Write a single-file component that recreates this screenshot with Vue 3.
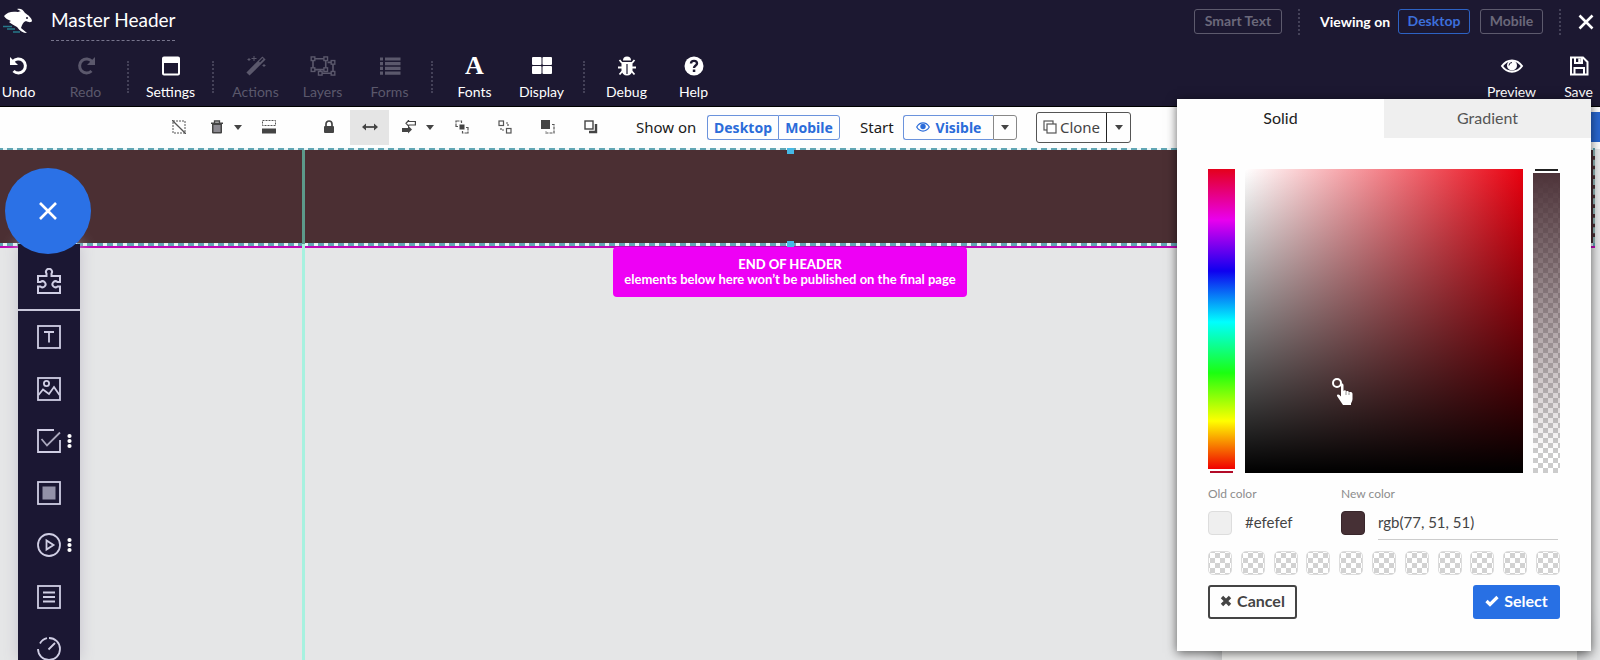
<script setup>
import { ref } from 'vue'

const rgb = ref('rgb(77, 51, 51)')
const hue = ref(0)
const alpha = ref(100)
const swatches = 11
const tools = [
  { name: 'Undo', icon: 'undo' },
  { name: 'Redo', icon: 'redo', off: true },
  { sep: true },
  { name: 'Settings', icon: 'settings' },
  { sep: true },
  { name: 'Actions', icon: 'wand', off: true },
  { name: 'Layers', icon: 'layers', off: true },
  { name: 'Forms', icon: 'forms', off: true },
  { sep: true },
  { name: 'Fonts', icon: 'fonts' },
  { name: 'Display', icon: 'display' },
  { sep: true },
  { name: 'Debug', icon: 'bug' },
  { name: 'Help', icon: 'help' },
]
const widgets = ['text', 'image', 'check', 'box', 'play', 'list', 'gauge']
</script>

<template>
  <div class="app">
    <header class="top">
      <div class="bar">
        <svg class="logo" viewBox="0 0 30 26" aria-hidden="true">
          <path fill="#fff" d="M1 8C4 4 9 3 15 4C17 3 18 3 19 4L14 1C17 0 20 1 22 5C25 7 29 10 29 13C28 15 25 14 23 13C20 14 19 17 18 20L24 25C20 25 17 23 14 19C11 17 8 16 6 14L8 13C5 12 2 10 1 8Z" />
          <circle cx="24" cy="10" r="1" fill="#1c1831" />
          <path stroke="#26798b" stroke-width="1.4" fill="none" d="M0 18.500H9M4 21H12M10 24H17" />
        </svg>
        <h1>Master Header</h1>
        <div class="bar-right">
          <button class="ghost smart">Smart Text</button>
          <i class="dots"></i>
          <span class="viewing">Viewing on</span>
          <button class="ghost on">Desktop</button>
          <button class="ghost mob">Mobile</button>
          <i class="dots last"></i>
          <button class="close" aria-label="Close"><svg width="16" height="16" viewBox="0 0 16 16"><path d="M1.500 1.500L14.500 14.500M14.500 1.500L1.500 14.500" stroke="#fff" stroke-width="2.600" /></svg></button>
        </div>
      </div>
      <nav class="tools">
        <template v-for="(t, i) in tools" :key="i">
          <i v-if="t.sep" class="dots tool-sep"></i>
          <button v-else class="tool" :class="{ off: t.off }">
            <svg v-if="t.icon === 'undo'" width="20" height="20" viewBox="0 0 20 20"><path d="M4 5.500A7 7 0 1 1 4.500 15" fill="none" stroke="currentColor" stroke-width="3" /><path d="M1 1V9H9Z" fill="currentColor" /></svg>
            <svg v-else-if="t.icon === 'redo'" width="20" height="20" viewBox="0 0 20 20"><path d="M16 5.500A7 7 0 1 0 15.500 15" fill="none" stroke="currentColor" stroke-width="3" /><path d="M19 1V9H11Z" fill="currentColor" /></svg>
            <svg v-else-if="t.icon === 'settings'" width="20" height="20" viewBox="0 0 20 20"><path fill="currentColor" fill-rule="evenodd" d="M3 .5H17A2 2 0 0 1 19 2.500V17.500A2 2 0 0 1 17 19.500H3A2 2 0 0 1 1 17.500V2.500A2 2 0 0 1 3 .5ZM3 7V17.500H17V7Z" /></svg>
            <svg v-else-if="t.icon === 'wand'" width="20" height="20" viewBox="0 0 20 20"><path d="M2 18L18 2" stroke="currentColor" stroke-width="4.500" /><path d="M13.500 6L17 2.500" stroke="#1c1831" stroke-width="1.500" /><path d="M3 2V5M1.500 3.500H4.500M8 0V5M5.500 2.500H10.500M18 8V11M16.500 9.500H19.500" stroke="currentColor" stroke-width="1" /></svg>
            <svg v-else-if="t.icon === 'layers'" width="28" height="22" viewBox="0 0 28 22" fill="none" stroke="currentColor" stroke-width="1.800"><path d="M3 3H17V15H3ZM19 7H25V19H11V16" /><g fill="#1c1831" stroke-width="1.500"><rect x="1" y="1" width="4" height="4" /><rect x="15" y="1" width="4" height="4" /><rect x="1" y="13" width="4" height="4" /><rect x="15" y="13" width="4" height="4" /><rect x="23" y="5" width="4" height="4" /><rect x="23" y="17" width="4" height="4" /><rect x="9" y="17" width="4" height="4" /></g></svg>
            <svg v-else-if="t.icon === 'forms'" width="22" height="20" viewBox="0 0 22 20"><path d="M6 3H21.500M6 7.700H21.500M6 12.400H21.500M6 17.100H21.500M1 3H4M1 7.700H4M1 12.400H4M1 17.100H4" stroke="currentColor" stroke-width="3.200" /></svg>
            <span v-else-if="t.icon === 'fonts'" class="letter" aria-hidden="true">A</span>
            <svg v-else-if="t.icon === 'display'" width="20" height="20" viewBox="0 0 20 20" fill="currentColor"><rect x="0" y="1" width="9.500" height="8" rx="1" /><rect x="10.500" y="1" width="9.500" height="8" rx="1" /><rect x="0" y="10" width="9.500" height="8" rx="1" /><rect x="10.500" y="10" width="9.500" height="8" rx="1" /></svg>
            <svg v-else-if="t.icon === 'bug'" width="20" height="20" viewBox="0 0 20 20"><path d="M6 4.500A4 4 0 0 1 14 4.500Z" fill="currentColor" /><path d="M4.500 6H15.500V14A5.500 5.500 0 0 1 4.500 14Z" fill="currentColor" /><path d="M5 7L2.500 4M15 7L17.500 4M5 11.500H1M15 11.500H19M5.500 15L2.500 18.500M14.500 15L17.500 18.500" stroke="currentColor" stroke-width="1.800" /><path d="M10 8V18" stroke="#1c1831" stroke-width="1.200" /></svg>
            <svg v-else width="20" height="20" viewBox="0 0 20 20"><circle cx="10" cy="10" r="9.500" fill="currentColor" /><path d="M7 7.500C7 4 13 4 13 7.500C13 9.500 10 9.500 10 12" fill="none" stroke="#1c1831" stroke-width="2.400" /><rect x="8.800" y="13.500" width="2.500" height="2.500" fill="#1c1831" /></svg>
            <span>{{ t.name }}</span>
          </button>
        </template>
        <button class="tool push">
          <svg width="22" height="20" viewBox="0 0 22 20"><path d="M1 10C6 2.500 16 2.500 21 10C16 17.500 6 17.500 1 10Z" fill="none" stroke="#fff" stroke-width="2" /><circle cx="11" cy="9.500" r="5" fill="#fff" /><path d="M8 9.500A3 3 0 0 1 11 6.500" fill="none" stroke="#1c1831" stroke-width="1" /></svg>
          <span>Preview</span>
        </button>
        <button class="tool">
          <svg width="20" height="20" viewBox="0 0 20 20" fill="none" stroke="#fff" stroke-width="2"><path d="M2 1.500H14L18.500 6V18.500H2ZM5.500 18V12H15V18M6 2V7H13V2" /><path d="M10.500 2.500V6" stroke-width="2.500" /></svg>
          <span>Save</span>
        </button>
      </nav>
    </header>

    <div class="subbar">
      <button class="ic" aria-label="Hide"><svg width="14" height="14" viewBox="0 0 14 14" fill="none" stroke="#555"><path d="M1 1H13V13H1Z" stroke-dasharray="2 1" /><path d="M0 0L14 14" stroke-width="1.300" /></svg></button>
      <button class="ic g1" aria-label="Delete"><svg width="12" height="14" viewBox="0 0 12 14"><path d="M3.500 3V1H8.500V3" fill="none" stroke="#444" stroke-width="1.300" /><path d="M0 2.500H12V4H0ZM1 4H11V12.500A1 1 0 0 1 10 13.500H2A1 1 0 0 1 1 12.500Z" fill="#444" /><rect x="2.500" y="5" width="7" height="7" fill="#8b8990" /></svg></button>
      <button class="caret g2" aria-label="Delete options"></button>
      <button class="ic g3" aria-label="Section"><svg width="14" height="14" viewBox="0 0 14 14"><path d="M.5 .5H13.500V5.500H.5Z" fill="none" stroke="#555" stroke-dasharray="2 1" /><rect y="8.500" width="14" height="5" fill="#444" /></svg></button>
      <button class="ic g4" aria-label="Lock"><svg width="12" height="14" viewBox="0 0 12 14"><path d="M3 7V4A3 3 0 0 1 9 4V7" fill="none" stroke="#444" stroke-width="1.700" /><rect x="1" y="6" width="10" height="7" rx="1" fill="#444" /></svg></button>
      <button class="ic stretch" aria-label="Full width"><svg width="16" height="8" viewBox="0 0 16 8"><path d="M2 4H14" stroke="#444" stroke-width="1.800" /><path d="M0 4L4 .5V7.500ZM16 4L12 .5V7.500Z" fill="#444" /></svg></button>
      <button class="ic g5" aria-label="Align"><svg width="14" height="14" viewBox="0 0 14 14"><path d="M7 1.500H13.400V5H7L6.500 6L4 3.300L6.500 .5Z" fill="none" stroke="#444" stroke-width="1.200" /><path d="M0 8H6V5.500L10 9.500L6 13.500V12H0Z" fill="#444" /></svg></button>
      <button class="caret g2" aria-label="Align options"></button>
      <button class="ic g6" aria-label="Group"><svg width="14" height="14" viewBox="0 0 14 14" fill="none" stroke="#555" stroke-width="1.200"><path d="M3 6.500H1V1H6.500V3M11 7.500H13V13H7.500V11" stroke-dasharray="5 1" /><rect x="4.500" y="4.500" width="5" height="5" fill="#444" stroke="none" /></svg></button>
      <button class="ic g7" aria-label="Ungroup"><svg width="14" height="14" viewBox="0 0 14 14" fill="none" stroke="#555" stroke-width="1.200"><rect x="1" y="1" width="4.500" height="4.500" /><rect x="8.500" y="8.500" width="4.500" height="4.500" /><path d="M3 8V10H6M8 3H10V6" stroke-dasharray="2 1" /></svg></button>
      <button class="ic g7" aria-label="Bring forward"><svg width="14" height="14" viewBox="0 0 14 14"><rect width="9" height="9" fill="#444" /><path d="M11 4.500H13V13H5V11" fill="none" stroke="#555" stroke-width="1.200" stroke-dasharray="3 1" /></svg></button>
      <button class="ic g7" aria-label="Send backward"><svg width="14" height="14" viewBox="0 0 14 14" fill="none" stroke="#444"><rect x="1" y="1" width="8" height="8" stroke-width="1.400" /><path d="M12 4V12H5" stroke-width="2.400" /></svg></button>
      <span class="label show">Show on</span>
      <div class="group"><button class="b1">Desktop</button><button class="b2">Mobile</button></div>
      <span class="label start">Start</span>
      <div class="group">
        <button class="b3"><svg width="14" height="10" viewBox="0 0 14 10"><path d="M.7 5C4 -.4 10 -.4 13.300 5C10 10.400 4 10.400 .7 5Z" fill="none" stroke="#2b6cd9" stroke-width="1.200" /><circle cx="7" cy="4.500" r="2.700" fill="#2b6cd9" /></svg>Visible</button>
        <button class="b4" aria-label="Start options"><i class="tri"></i></button>
      </div>
      <div class="clone">
        <button class="c1"><svg width="14" height="14" viewBox="0 0 14 14" fill="#fff" stroke="#555" stroke-width="1.200"><rect x="1" y="1" width="9" height="9" /><rect x="4" y="4" width="9" height="9" /></svg>Clone</button>
        <button class="c2" aria-label="Clone options"><i class="tri"></i></button>
      </div>
      <button class="done" aria-label="Done"></button>
    </div>

    <main class="canvas">
      <section class="strip"><i class="knob up"></i><i class="knob down"></i></section>
      <p class="end"><strong>END OF HEADER</strong><span>elements below here won’t be published on the final page</span></p>
      <i class="guide"></i>
      <button class="fab" aria-label="Close menu"><svg width="20" height="20" viewBox="0 0 20 20"><path d="M2 2L18 18M18 2L2 18" stroke="#fff" stroke-width="2.600" /></svg></button>
      <aside class="side">
        <button class="w puzzle" aria-label="Widgets"><svg width="24" height="26" viewBox="0 0 24 26" fill="none" stroke="#d0cee4" stroke-width="2"><path d="M1 8H9.500V5.500A3 3 0 1 1 14.500 5.500V8H23V14H20.500A3 3 0 1 0 20.500 18.500H23V25H1V18.500H3.500A3 3 0 1 0 3.500 14H1Z" /></svg></button>
        <div v-for="w in widgets" :key="w" class="cell">
          <button class="w" :aria-label="w">
            <svg width="24" height="24" viewBox="0 0 24 24" fill="none" stroke="#d0cee4" stroke-width="1.800">
              <template v-if="w === 'text'"><rect x="1" y="1" width="22" height="22" /><path d="M7 7H17M12 7V17.500" /></template>
              <template v-else-if="w === 'image'"><rect x="1" y="1" width="22" height="22" /><circle cx="9.500" cy="6.500" r="2.600" /><path d="M1.500 18L6 12.500L12 17L17 10L22.500 18" /></template>
              <template v-else-if="w === 'check'"><path d="M17 1H1V23H23V11" /><path d="M4.500 10L10 16.500L23 3.500" stroke="#aaa8bd" /></template>
              <template v-else-if="w === 'box'"><rect x="1" y="1" width="22" height="22" /><rect x="5.500" y="5.500" width="13" height="13" fill="#9391a8" stroke="none" /></template>
              <template v-else-if="w === 'play'"><circle cx="12" cy="12" r="11" /><path d="M9.500 7.500V16.500L16.500 12Z" /></template>
              <template v-else-if="w === 'list'"><rect x="1" y="1" width="22" height="22" /><path d="M6 7.500H18M6 12H18M6 16.500H18" stroke-width="2.200" /></template>
              <template v-else><path d="M12 1A11 11 0 1 1 1 12M3 6.500A11 11 0 0 1 10 1.200M11.500 12.500L18 6" /></template>
            </svg>
          </button>
          <svg v-if="w === 'check' || w === 'play'" class="more" width="5" height="16" viewBox="0 0 5 16" fill="#fff"><circle cx="2.500" cy="3" r="2.100" /><circle cx="2.500" cy="8" r="2.100" /><circle cx="2.500" cy="13" r="2.100" /></svg>
        </div>
      </aside>
    </main>

    <div class="behind"></div>
    <form class="panel" @submit.prevent>
      <div class="tabs"><button type="button">Solid</button><button type="button" class="grad">Gradient</button></div>
      <div class="body">
        <div class="picker">
          <label class="hue"><input v-model="hue" type="range" min="0" max="360" aria-label="Hue" /></label>
          <div class="sv"><i class="ring"></i>
            <svg class="hand" width="18" height="23" viewBox="0 0 18 23"><path fill="#fff" d="M5 1C6 0 7.500 1 7.500 2V8C8 7 10 7 10 8.500C11 7.500 13 8 13 9.500C14 8.500 16.500 9 16.500 11V16C16.500 18 15.500 19 15 20.500V22H7C5 19 3 16 1 13C.5 11.500 2.500 11 3.500 12L5 13.500Z" /><path d="M10 8.500V12M13 9.500V12" stroke="#777" stroke-width=".8" /></svg>
          </div>
          <label class="alpha"><input v-model="alpha" type="range" min="0" max="100" aria-label="Opacity" /></label>
        </div>
        <div class="colors">
          <div class="old"><span class="cap">Old color</span><div class="row"><i class="sw light"></i><span>#efefef</span></div></div>
          <div class="new"><label class="cap" for="rgb">New color</label><div class="row"><i class="sw dark"></i><input id="rgb" v-model="rgb" type="text" /></div></div>
        </div>
        <div class="presets"><button v-for="n in swatches" :key="n" type="button" class="preset" :aria-label="'Preset ' + n"></button></div>
        <div class="actions">
          <button type="button" class="cancel"><svg width="12" height="12" viewBox="0 0 12 12"><path d="M2 2L10 10M10 2L2 10" stroke="#444" stroke-width="3.400" /></svg>Cancel</button>
          <button type="submit" class="select"><svg width="14" height="12" viewBox="0 0 14 12"><path d="M1.500 6L5 9.500L12.500 2" fill="none" stroke="#fff" stroke-width="3.200" /></svg>Select</button>
        </div>
      </div>
    </form>
  </div>
</template>

<style>
body { margin: 0; overflow: hidden; }
</style>

<style scoped>
.app { position: relative; min-height: 100vh; overflow: hidden; display: flex; flex-direction: column; font-family: Lato, "Open Sans", sans-serif; color: #222; }
button { font: inherit; color: inherit; border: 0; background: none; padding: 0; margin: 0; cursor: pointer; box-sizing: border-box; }
svg { display: block; flex: none; }
.top { background: #1c1831; color: #fff; height: 107px; box-sizing: border-box; border-bottom: 1px solid #000; }
.bar { display: flex; height: 43px; align-items: flex-start; }
.logo { width: 30px; height: 26px; margin: 8px 0 0 3px; }
h1 { margin: 6px 0 0 18px; font-size: 19px; font-weight: 400; line-height: 28px; padding-bottom: 6px; border-bottom: 1px dashed #77748c; }
.bar-right { margin: 9px 6px 0 auto; display: flex; align-items: center; height: 25px; font-size: 14px; font-weight: 700; }
.ghost { height: 25px; border: 1px solid #5d5a6d; border-radius: 3px; color: #6b687a; font-size: 14px; line-height: 20px; padding-bottom: 2px; }
.smart { width: 88px; }
.dots { height: 26px; border-left: 2px dotted #444158; box-sizing: border-box; width: 2px; margin: 0 20px 0 16px; }
.viewing { width: 70px; margin-right: 8px; white-space: nowrap; }
.on { width: 72px; border-color: #2d62c4; color: #3c6fdb; }
.mob { width: 63px; margin-left: 10px; }
.dots.last { margin: 0 17px 0 16px; }
.tools { display: flex; margin: 0 -12px 0 -15px; height: 62px; align-items: flex-start; }
.tool { width: 67px; height: 62px; display: flex; flex-direction: column; align-items: center; font-size: 14px; line-height: 18px; padding-top: 13px; }
.tool svg { height: 20px; margin-bottom: 7px; overflow: visible; }
.tool.off { color: #5b586c; }
.push { margin-left: auto; }
.letter { font: 700 26px/20px "Liberation Serif", serif; height: 20px; margin-bottom: 7px; }
.tools .tool-sep { height: 32px; margin: 18px 8px 0; }
.subbar { height: 42px; background: #fefefe; display: flex; align-items: center; padding: 0 0 2px 172px; box-sizing: border-box; font-family: "Noto Sans", sans-serif; }
.ic { display: flex; flex: none; align-items: center; justify-content: center; width: 14px; height: 35px; }
.g1 { margin-left: 24px; }
.g3 { margin-left: 20px; }
.g4 { margin-left: 46px; }
.stretch { width: 39px; margin-left: 14px; background: #e5e5e5; }
.g5 { margin-left: 13px; }
.g6 { margin-left: 21px; }
.g7 { margin-left: 29px; }
.caret, .tri { border: 4px solid transparent; border-top: 5px solid #444; border-bottom: 0; width: 0; height: 0; display: block; }
.g2 { margin-left: 10px; }
.label { font-size: 15px; line-height: 20px; white-space: nowrap; color: #1a1a1a; }
.show { margin-left: 38px; width: 71px; }
.group { display: flex; color: #2b6cd9; font-size: 14px; font-weight: 700; }
.group button { height: 25px; border: 1px solid #6b93dc; display: flex; align-items: center; justify-content: center; gap: 6px; }
.b1 { width: 71px; border-radius: 3px 0 0 3px; }
.b2 { width: 62px; border-radius: 0 3px 3px 0; }
.group .b1, .group .b3 { border-right: 0; }
.start { margin-left: 20px; width: 43px; }
.b3 { width: 90px; border-radius: 3px 0 0 3px; }
.group .b4 { width: 24px; border-color: #888; border-radius: 0 3px 3px 0; }
.clone { display: flex; margin-left: 19px; border: 1px solid #555; border-radius: 3px; height: 31px; width: 95px; box-sizing: border-box; color: #444; font-size: 15px; }
.c1 { flex: 1; display: flex; align-items: center; justify-content: center; gap: 3px; border-right: 1px solid #222; }
.c2 { width: 23px; display: flex; align-items: center; justify-content: center; }
.done { margin-left: auto; width: 40px; height: 30px; background: #2866cf; }
.canvas { flex: 1; background: #e5e6e7; position: relative; }
.strip { position: relative; height: 98px; box-sizing: border-box; margin: -1px 5px 0 0; background: #4b2f33; border: 2px dashed #5ea9b4; border-width: 2px 0 3px; border-image: repeating-linear-gradient(90deg, #62a6b4 0 6px, #e9f5f7 6px 10px) 3; }
.strip::before { content: ""; position: absolute; top: 0; bottom: 0; right: 0; border-right: 2px dashed #8fb5b5; }
.strip::after { content: ""; position: absolute; left: 0; right: 0; bottom: -5px; height: 2px; background: #bd08b5; }
.knob { position: absolute; z-index: 1; left: 787px; width: 7px; height: 6px; background: #45b9e6; }
.up { top: -2px; }
.down { bottom: -4px; }
.end { margin: 1px auto 0; position: relative; width: 354px; height: 50px; left: -10px; padding-top: 10px; box-sizing: border-box; background: #ee00f5; border-radius: 4px; color: #fff; font-size: 13px; line-height: 15px; font-weight: 700; text-align: center; white-space: nowrap; }
.end strong, .end span { display: block; }
.guide { position: absolute; top: 1px; bottom: 0; left: 302px; width: 3px; background: linear-gradient(#5c9a8a 94px, #a6f1df 94px); }
.side { position: absolute; left: 18px; top: 95px; bottom: 0; width: 62px; overflow: hidden; background: #1b1733; box-shadow: 0 0 14px #c5c2cc; }
.fab { position: absolute; z-index: 2; left: 5px; top: 19px; width: 86px; height: 86px; border-radius: 50%; background: #2b71e6; display: flex; align-items: center; justify-content: center; }
.w { display: flex; align-items: center; justify-content: center; width: 62px; height: 52px; }
.puzzle { height: 67px; padding-top: 9px; border-bottom: 2px solid #c9c7da; }
.cell { position: relative; }
.more { position: absolute; left: 49px; top: 18px; }
.behind { position: absolute; left: 1222px; right: 23px; bottom: 0; height: 40px; background: #eeeeec; box-shadow: 0 0 24px #0006; }
.panel { position: absolute; top: 99px; right: 9px; width: 414px; height: 552px; background: #fefefe; box-shadow: 0 2px 10px #0009; }
.tabs { display: flex; height: 39px; font-size: 16px; }
.tabs button { flex: 1; color: #222; padding-bottom: 2px; }
.tabs .grad { background: #efefef; color: #555; }
.body { padding: 31px 31px 0 31px; }
.picker { display: flex; height: 304px; gap: 10px; }
.hue, .alpha { width: 27px; display: flex; flex-direction: column; position: relative; }
.hue { background: linear-gradient(#e4001b, #e900ee 17%, #0f00ef 34%, #0ff 51%, #1bff10 68%, #ff0 84%, #f00000) 0 0 / 100% 300px no-repeat; }
.hue::after { content: ""; position: absolute; left: 2px; right: 2px; bottom: 0; height: 2px; background: #b20b28; }
.alpha { background: linear-gradient(#4d3339, #4d333900 94%) 0 4px / 100% 300px no-repeat, repeating-conic-gradient(#ccc 0 25%, #fff 0 50%) 0 4px / 10px 10px; }
.alpha::before { content: ""; position: absolute; inset: 0 0 auto; height: 4px; background: #fefefe; }
.alpha::after { content: ""; position: absolute; left: 2px; right: 2px; top: 0; height: 2px; background: #222; }
.hue input, .alpha input { width: 100%; height: 100%; margin: 0; opacity: 0; }
.sv { position: relative; flex: 1; background: linear-gradient(#0000, #000), linear-gradient(90deg, #fff, #e9000f); }
.ring { position: absolute; left: 87px; top: 209px; width: 10px; height: 10px; box-sizing: border-box; border: 2px solid #fff; border-radius: 50%; }
.hand { position: absolute; left: 91px; top: 214px; }
.colors { display: flex; margin-top: 12px; }
.cap { display: block; font-size: 12px; line-height: 18px; color: #8d8d8d; height: 25px; }
.old { flex: none; width: 133px; }
.new { flex: 1; min-width: 0; }
.row { display: flex; gap: 13px; font-size: 15px; line-height: 24px; color: #444; align-items: flex-start; }
.sw { width: 24px; height: 24px; box-sizing: border-box; border-radius: 4px; border: 1px solid #ddd; flex: none; margin-top: 1px; }
.light { background: #efefef; }
.dark { background: #463035; border-color: #38262b; }
.row input { flex: 1; min-width: 0; border: 0; border-bottom: 1px solid #ccc; font: inherit; color: inherit; padding: 0 0 5px; background: none; height: 30px; box-sizing: border-box; margin-right: 2px; outline: 0; }
.presets { display: flex; justify-content: space-between; margin-top: 11px; }
.preset { width: 24px; height: 24px; border: 1px solid #ddd; border-radius: 5px; background: repeating-conic-gradient(#d2d2d2 0 25%, #fff 0 50%) 1px 1px / 10px 10px; }
.actions { display: flex; justify-content: space-between; margin-top: 10px; font-size: 16px; font-weight: 700; }
.actions button { height: 34px; border-radius: 3px; display: flex; align-items: center; justify-content: center; gap: 5px; padding-bottom: 3px; }
.cancel { width: 89px; border: 2px solid #444; color: #444; }
.select { width: 87px; background: #2870e4; color: #fff; }
</style>
